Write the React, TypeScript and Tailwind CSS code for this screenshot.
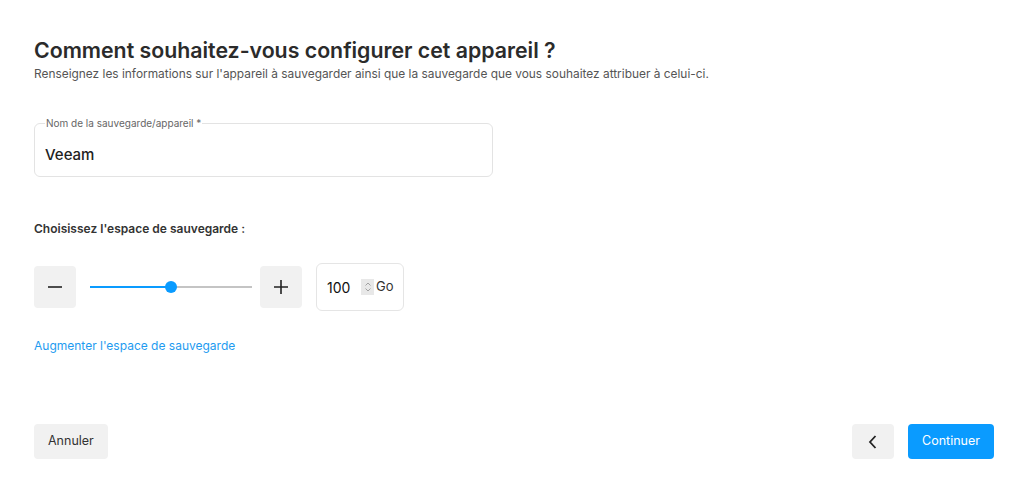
import { useState } from "react";

const font = { fontFamily: "Inter, 'Liberation Sans', sans-serif" };

export default function App() {
  const [size, setSize] = useState(100);
  const [name, setName] = useState("Veeam");
  const pct = 50;

  return (
    <div className="flex min-h-[487px] w-full flex-col bg-white pb-[28px] pl-[34px] pr-[30px] pt-[38px] text-[#333]" style={font}>
      {/* En-tête */}
      <h1 className="text-[21.3px] font-semibold leading-[25px] text-[#2b2b2b]">
        Comment souhaitez-vous configurer cet appareil ?
      </h1>
      <p className="mt-[3px] text-[11.9px] leading-[16px] text-[#555]">
        Renseignez les informations sur l'appareil à sauvegarder ainsi que la sauvegarde que vous souhaitez attribuer à celui-ci.
      </p>

      {/* Champ nom */}
      <fieldset className="mt-[35px] h-[60px] w-[459px] rounded-[6px] border border-[#e3e3e3] px-[10px] pb-[6px]">
        <legend className="px-[1px] text-[10px] leading-[12px] text-[#666]">Nom de la sauvegarde/appareil *</legend>
        <input
          value={name}
          onChange={(e) => setName(e.target.value)}
          className="mt-[17px] w-full bg-transparent text-[15px] font-medium leading-[18px] text-[#222] outline-none"
        />
      </fieldset>

      {/* Espace de sauvegarde */}
      <div className="mt-[44px] text-[12px] font-semibold leading-[16px] text-[#333]">
        Choisissez l'espace de sauvegarde :
      </div>

      <div className="mt-[26px] flex items-center">
        <button
          onClick={() => setSize((v) => Math.max(0, v - 10))}
          className="flex h-[42px] w-[42px] items-center justify-center rounded-[4px] bg-[#f1f1f1]"
          aria-label="Diminuer"
        >
          <svg width="16" height="16" viewBox="0 0 16 16">
            <path d="M1 8h14" stroke="#222" strokeWidth="1.6" />
          </svg>
        </button>

        <div className="relative ml-[14px] mr-[8px] h-[12px] w-[162px]">
          <div className="absolute inset-x-0 top-[5px] h-[2px] bg-[#c4c4c4]" />
          <div className="absolute left-0 top-[5px] h-[2px] bg-[#0a9bff]" style={{ width: `${pct}%` }} />
          <div
            className="absolute top-0 h-[12px] w-[12px] -translate-x-1/2 rounded-full bg-[#0a9bff]"
            style={{ left: `${pct}%` }}
          />
        </div>

        <button
          onClick={() => setSize((v) => v + 10)}
          className="flex h-[42px] w-[42px] items-center justify-center rounded-[4px] bg-[#f1f1f1]"
          aria-label="Augmenter"
        >
          <svg width="16" height="16" viewBox="0 0 16 16">
            <path d="M1 8h14M8 1v14" stroke="#222" strokeWidth="1.6" />
          </svg>
        </button>

        <div className="ml-[14px] flex h-[48px] w-[88px] items-center rounded-[6px] border border-[#e5e5e5] pl-[10px]">
          <span className="w-[34px] text-[14px] text-[#111]">{size}</span>
          <span className="flex h-[16px] w-[13px] items-center justify-center bg-[#e8e8e8]">
            <svg width="8" height="12" viewBox="0 0 8 12">
              <path d="M1.5 4.5L4 2l2.5 2.5M1.5 7.5L4 10l2.5-2.5" fill="none" stroke="#999" strokeWidth="0.9" />
            </svg>
          </span>
          <span className="ml-[2px] text-[13px] text-[#333]">Go</span>
        </div>
      </div>

      <a href="#" className="mt-[27px] w-fit text-[12px] leading-[16px] text-[#1e9bf0]">
        Augmenter l'espace de sauvegarde
      </a>

      {/* Actions */}
      <div className="mt-auto flex items-center justify-between">
        <button className="h-[35px] rounded-[4px] bg-[#f1f1f1] px-[14px] text-[12.5px] text-[#333]">Annuler</button>
        <div className="flex items-center gap-[14px]">
          <button className="flex h-[35px] w-[42px] items-center justify-center rounded-[4px] bg-[#f1f1f1]" aria-label="Retour">
            <svg width="12" height="16" viewBox="0 0 12 16">
              <path d="M8.5 2L3 8l5.5 6" fill="none" stroke="#222" strokeWidth="1.8" />
            </svg>
          </button>
          <button className="h-[35px] rounded-[4px] bg-[#0a9bff] px-[14px] text-[12.5px] text-white">Continuer</button>
        </div>
      </div>
    </div>
  );
}
